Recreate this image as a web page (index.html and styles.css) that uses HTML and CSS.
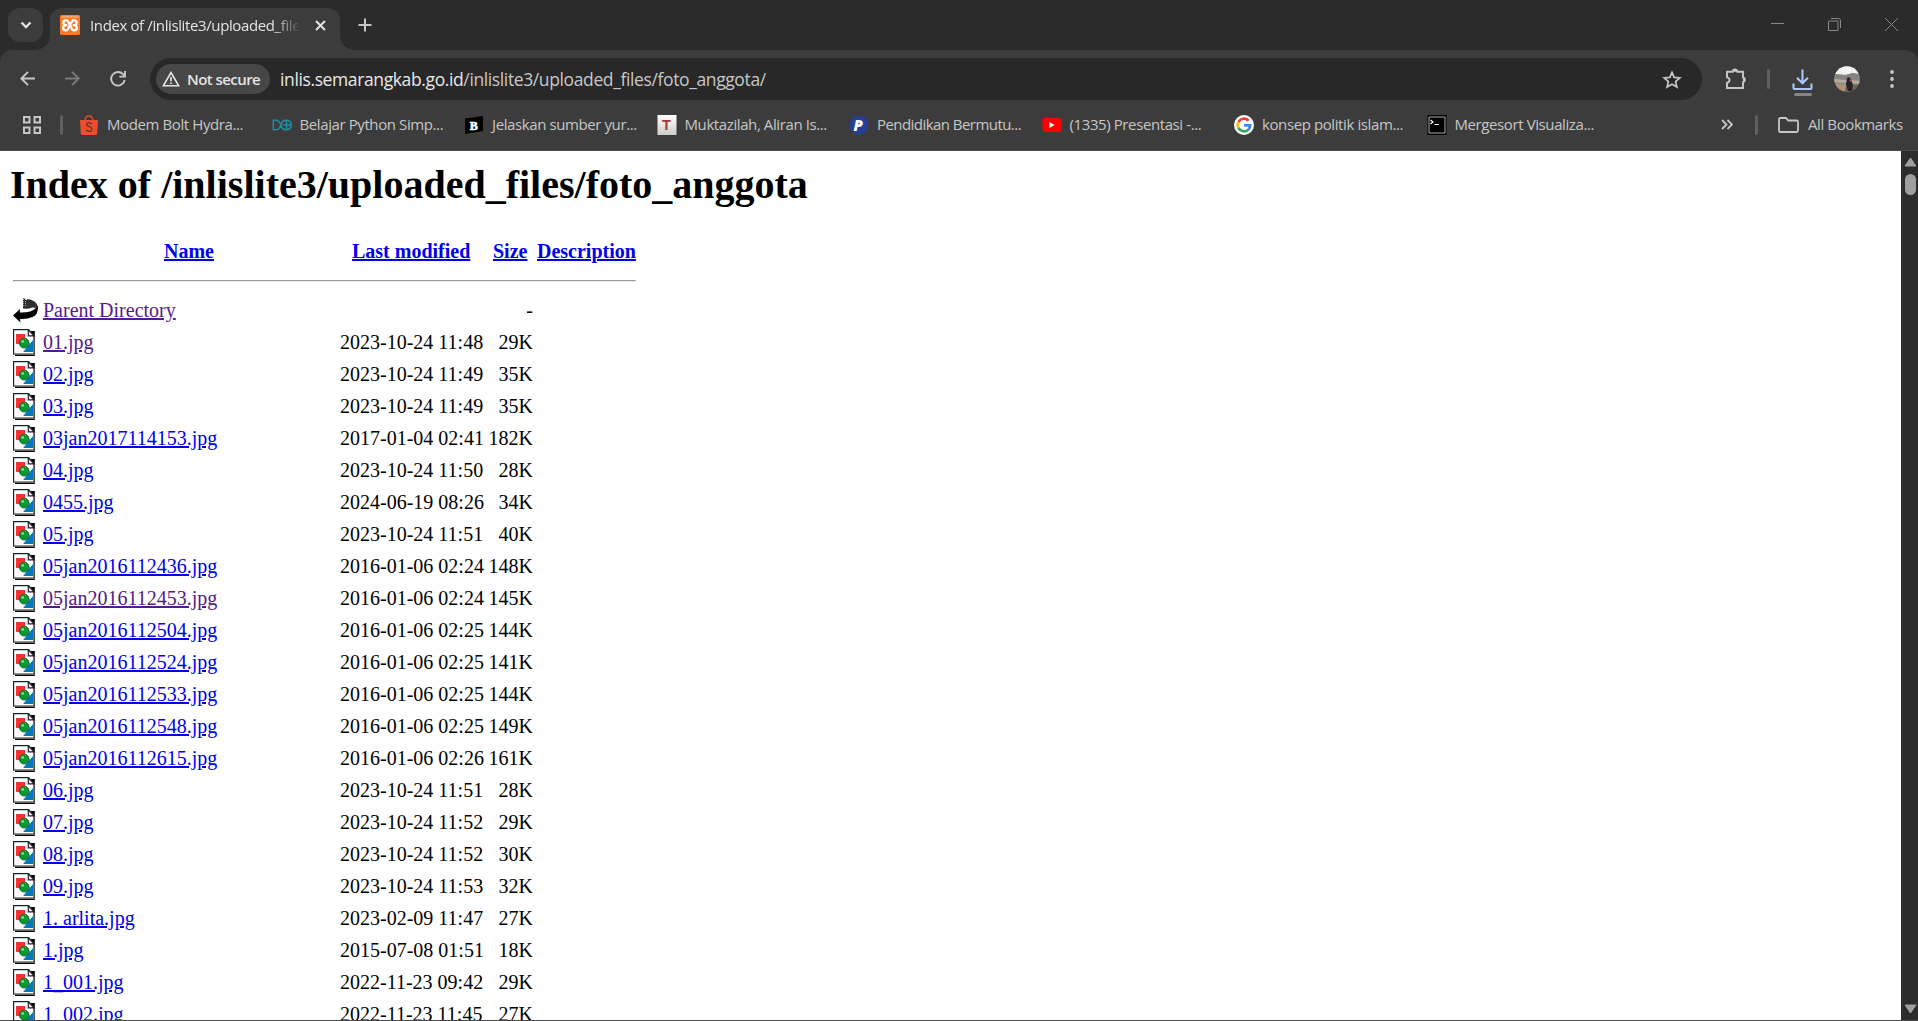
FILE: index.html
```html
<!DOCTYPE html>
<html lang="en">
<head>
<meta charset="utf-8">
<title>Index of /inlislite3/uploaded_files/foto_anggota</title>
<link rel="stylesheet" href="styles.css">
</head>
<body>
<svg class="defs" width="0" height="0">
  <symbol id="file" viewBox="0 0 23 27">
    <path d="M2 2h19.8V27H2z" fill="#000"/>
    <path d="M.6.6H15.500L21 6.500V25H.6z" fill="#fff" stroke="#222" stroke-width="1.200"/>
    <path d="M21 7v18.400H1" fill="none" stroke="#777" stroke-width="1"/>
    <path d="M3 5h9v10H3z" fill="#f93030"/>
    <path d="M20 11v12H10z" fill="#0878bd"/>
    <circle cx="11.300" cy="14.200" r="4.900" fill="#099a32" stroke="#05671f" stroke-width=".8"/>
    <circle cx="9.700" cy="12.500" r="1.300" fill="#a8e0b0"/>
    <path d="M15.300.8V6.800H21z" fill="#fff" stroke="#222" stroke-width="1.200"/>
  </symbol>
</svg>
<header class="tabstrip">
  <button class="tabsearch"><svg width="12" height="8" viewBox="0 0 12 8"><path d="M1.500 1.500 6 6l4.500-4.500" class="ln bright" stroke-width="2.300"/></svg></button>
  <div class="tab">
    <svg width="20" height="20" viewBox="0 0 20 20"><rect width="20" height="20" rx="1.500" fill="#fb7a24"/><path d="M1 .8h18v2H1z" fill="#f9a267"/><path d="M7.300 10.200H5.800a2.500 2.500 0 1 1 2.400-3.400L10 10l1.800-3.200a2.500 2.500 0 1 1 2.400 3.400h-1.500M5.800 10.200a2.600 2.600 0 1 0 2.500 3.300L10 10l1.700 3.500a2.600 2.600 0 1 0 2.500-3.300" fill="none" stroke="#fff" stroke-width="2.300"/></svg>
    <span class="tabtitle">Index of /inlislite3/uploaded_files</span>
    <svg class="tabclose" width="11" height="11" viewBox="0 0 11 11"><path d="M1 1l9 9M10 1l-9 9" class="ln bright" stroke-width="2"/></svg>
  </div>
  <svg class="newtab" width="14" height="14" viewBox="0 0 14 14"><path d="M7 .5v13M.5 7h13" class="ln" stroke-width="2"/></svg>
  <div class="winctl">
    <svg width="13" height="13" viewBox="0 0 13 13"><path d="M0 5.500h13" stroke="#8a8a8a"/></svg>
    <svg width="13" height="13" viewBox="0 0 13 13"><path d="M.5 3.500v9h9.500v-9.500H.5M3 .5h7.500q2 0 2 2v7.500" fill="none" stroke="#8a8a8a"/></svg>
    <svg width="13" height="13" viewBox="0 0 13 13"><path d="M0 0l13 13M13 0 0 13" stroke="#8a8a8a"/></svg>
  </div>
</header>
<nav class="toolbar">
  <svg class="back" width="15" height="15" viewBox="0 0 15 15"><path d="M15 7.500H1.500M8 .8 1.300 7.500 8 14.200" class="ln" stroke-width="1.900"/></svg>
  <svg class="fwd" width="15" height="15" viewBox="0 0 15 15"><path d="M0 7.500h13.500M7 .8l6.700 6.700L7 14.200" class="ln dim" stroke-width="1.900"/></svg>
  <svg class="reload" width="16" height="16" viewBox="0 0 16 16"><path d="M14.700 9A6.800 6.800 0 1 1 13 3.200l1.800 1.900M15 0v5.600H9.400" class="ln" stroke-width="1.900"/></svg>
  <div class="omnibox">
    <div class="chip">
      <svg width="18" height="16" viewBox="0 0 18 16"><path d="M9 1.500 16.700 14.800H1.300z" class="ln bright" stroke-width="1.600"/><path d="M9 6v4.300M9 11.400v1.700" class="ln bright" stroke-width="1.700"/></svg>
      <span>Not secure</span>
    </div>
    <p class="url">inlis.semarangkab.go.id<span>/inlislite3/uploaded_files/foto_anggota/</span></p>
    <svg class="star" width="20" height="19" viewBox="0 0 20 19"><path d="M10 2.300l2.200 5.100 5.600.5-4.200 3.700 1.300 5.500L10 14.200l-4.900 2.900 1.300-5.500L2.200 7.900l5.600-.5z" class="ln" stroke-width="1.700"/></svg>
  </div>
  <svg class="ext" width="22" height="22" viewBox="0 0 22 22"><path d="M2 3.800h5.600a2.400 2.400 0 0 1 4.800 0H18v5.700a2.400 2.400 0 0 1 0 4.700V20H2v-5.200c3.400-.6 3.400-4.800 0-5.400z" class="ln" stroke-width="1.900"/><path d="M7.600 3.800a2.400 2.400 0 0 1 4.800 0zM18 9.500a2.400 2.400 0 0 1 0 4.700z" fill="#c7c7c7"/></svg>
  <i class="sep"></i>
  <svg class="dl" width="21" height="28" viewBox="0 0 21 28"><path d="M10.500.5v13M5 8.800l5.500 5.500L16 8.800M1.500 14.500V19q0 1 1 1h16q1 0 1-1v-4.500" fill="none" stroke="#a8c7fa" stroke-width="2.100"/><rect x="2" y="24" width="18" height="3" rx="1.500" fill="#858585"/></svg>
  <svg class="avatar" width="26" height="26" viewBox="0 0 26 26"><clipPath id="av"><circle cx="13" cy="13" r="12.700"/></clipPath><g clip-path="url(#av)"><path d="M0 0h26v26H0z" fill="#9b8b7c"/><path d="M0 0h26v8L19 7 12 9 0 8z" fill="#f2f4f4"/><path d="M0 8l11 1 8-2 7 2v5H0z" fill="#858481"/><path d="M0 13l26 2v3L0 16z" fill="#b1aca3"/><path d="M0 20l26-2v8H0z" fill="#6e6458"/><path d="M0 18l12 1-1 6H0z" fill="#b39378"/><path d="M13 12q3-2 4 2l2 5-1 6h-4l-2-7z" fill="#222228"/><circle cx="16.500" cy="14.500" r="1" fill="#bd4e56"/></g></svg>
  <svg class="menu" width="4" height="18" viewBox="0 0 4 18"><g fill="#c7c7c7"><circle cx="2" cy="2" r="1.900"/><circle cx="2" cy="9" r="1.900"/><circle cx="2" cy="16" r="1.900"/></g></svg>
</nav>
<nav class="bookmarks">
  <svg class="apps" width="18" height="18" viewBox="0 0 18 18"><path d="M1 1h5.500v5.500H1zM11.500 1H17v5.500h-5.500zM1 11.500h5.500V17H1zM11.500 11.500H17V17h-5.500z" class="ln" stroke-width="2"/></svg>
  <i class="sep"></i>
  <ul>
    <li><svg width="20" height="20" viewBox="0 0 20 20"><path d="M6 6q0-5 4-5t4 5" fill="none" stroke="#ee4d2d" stroke-width="1.300"/><path d="M1 5h18l-.8 13.500q-.1 1.500-1.600 1.500H3.400q-1.500 0-1.600-1.500z" fill="#ee4d2d"/><path d="M12.800 8.800q-4.600-2.600-5.200.5c0 2.700 5.500 2 5.400 5q-.9 3.600-5.800.9" fill="none" stroke="#633228" stroke-width="1.400"/></svg><span>Modem Bolt Hydra...</span></li>
    <li><svg width="20" height="20" viewBox="0 0 20 20"><path d="M1.300 5.200H4q3 0 5 4.800-2 4.800-5 4.800H1.300zM8.500 10q1.800-4.800 5.500-4.800 5.200 0 5.200 4.800T14 14.800q-3.700 0-5.500-4.800M14.500 5v10M10.500 10h8" fill="none" stroke="#238da1" stroke-width="1.500"/></svg><span>Belajar Python Simp...</span></li>
    <li><svg width="20" height="20" viewBox="0 0 20 20"><path d="M1 3.500 19 1v15L1 19z" fill="#000"/><text x="5.700" y="14.500" font-family="Liberation Serif" font-weight="700" font-size="12" fill="#fff" stroke="#fff" stroke-width=".6">B</text></svg><span>Jelaskan sumber yur...</span></li>
    <li><svg width="20" height="20" viewBox="0 0 20 20"><defs><linearGradient id="tg" x2="0" y2="1"><stop stop-color="#fff"/><stop offset="1" stop-color="#ccc"/></linearGradient></defs><path d="M.5 0h19v20H.5z" fill="url(#tg)"/><text x="5" y="15" font-family="Liberation Sans" font-weight="700" font-size="14.500" fill="#a33b3b">T</text></svg><span>Muktazilah, Aliran Is...</span></li>
    <li><svg width="20" height="20" viewBox="0 0 20 20"><circle cx="10" cy="10" r="9.500" fill="#253f94"/><text x="4.600" y="15.500" font-family="Open Sans" font-style="italic" font-weight="800" font-size="15" fill="#fff">P</text></svg><span class="b5">Pendidikan Bermutu...</span></li>
    <li><svg width="20" height="20" viewBox="0 0 20 20"><rect x=".5" y="3" width="19" height="14" rx="3" fill="#f00"/><path d="M7.500 7v6l5-3z" fill="#fff"/></svg><span>(1335) Presentasi -...</span></li>
    <li><svg width="20" height="20" viewBox="0 0 20 20"><circle cx="10" cy="10" r="10" fill="#fff"/><g fill="none" stroke-width="2.700"><path d="M14.600 5.700A6.300 6.300 0 0 0 4.500 7" stroke="#ea4335"/><path d="M4.500 7a6.300 6.300 0 0 0 0 6" stroke="#fbbc05"/><path d="M4.500 13a6.300 6.300 0 0 0 9.800 1.700" stroke="#34a853"/><path d="M14.300 14.700A6 6 0 0 0 16.200 10.300H10" stroke="#4285f4"/></g></svg><span>konsep politik islam...</span></li>
    <li><svg width="20" height="20" viewBox="0 0 20 20"><path d="M.5 0h19v20H.5z" fill="#000"/><path d="M2 2h16v16H2z" fill="none" stroke="#aaa" stroke-width="1"/><path d="M3.500 5 6 7 3.500 9M7.500 9.500H12" fill="none" stroke="#fff" stroke-width="1.200"/></svg><span>Mergesort Visualiza...</span></li>
  </ul>
  <svg class="more" width="12" height="11" viewBox="0 0 12 11"><path d="M1 1l4.500 4.500L1 10M6.500 1 11 5.500 6.500 10" class="ln" stroke-width="1.800"/></svg>
  <i class="sep"></i>
  <svg class="folder" width="21" height="16" viewBox="0 0 21 16"><path d="M1 2.500Q1 1 2.500 1H8l2.200 2.500h8.300q1.500 0 1.500 1.500v8.500q0 1.500-1.500 1.500h-16Q1 15 1 13.500z" class="ln" stroke-width="1.800"/></svg>
  <span class="all">All Bookmarks</span>
</nav>
<div class="viewport">
<main>
  <h1>Index of /inlislite3/uploaded_files/foto_anggota</h1>
  <div class="listing">
    <div class="row head"><a href="#" class="c-name">Name</a><a href="#" class="c-date">Last modified</a><a href="#" class="c-size">Size</a><a href="#" class="c-desc">Description</a></div>
    <hr>
    <div class="row"><svg class="up" viewBox="0 0 25 25"><path d="M10 .5h2V2h2V1q9 1 10.700 7v3q-3-1.800-6-1.300-3 1.500-8.700.8z" fill="#303030"/><path d="M10 1.500h3m-3 2h4m-4 2h4m-4 2h4" stroke="#aaa" stroke-width=".9" stroke-dasharray="1 1"/><path d="M24.700 8q1 9-5.200 11-5.500 2.500-12.500 2l.5 3.500L0 17.500l7-6.500-.2 3.500q11.200.5 16.200-4.500z" fill="#000"/></svg><a href="#" class="seen">Parent Directory</a><span></span><b>-</b></div>
    <div class="row"><svg><use href="#file"/></svg><a href="#" class="seen">01.jpg</a><span>2023-10-24 11:48</span><b>29K</b></div>
    <div class="row"><svg><use href="#file"/></svg><a href="#">02.jpg</a><span>2023-10-24 11:49</span><b>35K</b></div>
    <div class="row"><svg><use href="#file"/></svg><a href="#">03.jpg</a><span>2023-10-24 11:49</span><b>35K</b></div>
    <div class="row"><svg><use href="#file"/></svg><a href="#">03jan2017114153.jpg</a><span>2017-01-04 02:41</span><b>182K</b></div>
    <div class="row"><svg><use href="#file"/></svg><a href="#">04.jpg</a><span>2023-10-24 11:50</span><b>28K</b></div>
    <div class="row"><svg><use href="#file"/></svg><a href="#">0455.jpg</a><span>2024-06-19 08:26</span><b>34K</b></div>
    <div class="row"><svg><use href="#file"/></svg><a href="#">05.jpg</a><span>2023-10-24 11:51</span><b>40K</b></div>
    <div class="row"><svg><use href="#file"/></svg><a href="#">05jan2016112436.jpg</a><span>2016-01-06 02:24</span><b>148K</b></div>
    <div class="row"><svg><use href="#file"/></svg><a href="#" class="seen">05jan2016112453.jpg</a><span>2016-01-06 02:24</span><b>145K</b></div>
    <div class="row"><svg><use href="#file"/></svg><a href="#">05jan2016112504.jpg</a><span>2016-01-06 02:25</span><b>144K</b></div>
    <div class="row"><svg><use href="#file"/></svg><a href="#">05jan2016112524.jpg</a><span>2016-01-06 02:25</span><b>141K</b></div>
    <div class="row"><svg><use href="#file"/></svg><a href="#">05jan2016112533.jpg</a><span>2016-01-06 02:25</span><b>144K</b></div>
    <div class="row"><svg><use href="#file"/></svg><a href="#">05jan2016112548.jpg</a><span>2016-01-06 02:25</span><b>149K</b></div>
    <div class="row"><svg><use href="#file"/></svg><a href="#">05jan2016112615.jpg</a><span>2016-01-06 02:26</span><b>161K</b></div>
    <div class="row"><svg><use href="#file"/></svg><a href="#">06.jpg</a><span>2023-10-24 11:51</span><b>28K</b></div>
    <div class="row"><svg><use href="#file"/></svg><a href="#">07.jpg</a><span>2023-10-24 11:52</span><b>29K</b></div>
    <div class="row"><svg><use href="#file"/></svg><a href="#">08.jpg</a><span>2023-10-24 11:52</span><b>30K</b></div>
    <div class="row"><svg><use href="#file"/></svg><a href="#">09.jpg</a><span>2023-10-24 11:53</span><b>32K</b></div>
    <div class="row"><svg><use href="#file"/></svg><a href="#">1. arlita.jpg</a><span>2023-02-09 11:47</span><b>27K</b></div>
    <div class="row"><svg><use href="#file"/></svg><a href="#">1.jpg</a><span>2015-07-08 01:51</span><b>18K</b></div>
    <div class="row"><svg><use href="#file"/></svg><a href="#">1_001.jpg</a><span>2022-11-23 09:42</span><b>29K</b></div>
    <div class="row"><svg><use href="#file"/></svg><a href="#">1_002.jpg</a><span>2022-11-23 11:45</span><b>27K</b></div>
  </div>
</main>
<aside class="scrollbar">
  <svg width="13" height="10" viewBox="0 0 13 10"><path d="M6.500 1 12 9H1z" fill="#9f9f9f" stroke="#9f9f9f" stroke-linejoin="round"/></svg>
  <i class="thumb"></i>
  <svg class="down" width="13" height="10" viewBox="0 0 13 10"><path d="M6.500 9 12 1H1z" fill="#9f9f9f" stroke="#9f9f9f" stroke-linejoin="round"/></svg>
</aside>
</div>
</body>
</html>
```
FILE: styles.css
```css
* { box-sizing: border-box; }
html, body { height: 100%; }
body {
  margin: 0;
  overflow: hidden;
  display: flex;
  flex-direction: column;
  background: #3c3c3c;
  font-family: "Open Sans", "Noto Sans", sans-serif;
  font-size: 15px;
  color: #c7c7c7;
}
svg { display: block; flex: none; }
.defs { position: absolute; }
.ln { fill: none; stroke: #c7c7c7; }
.bright { stroke: #e3e3e3; }
.dim { stroke: #7b7b7b; }
.sep { flex: none; width: 3px; height: 20px; border-radius: 2px; background: #5f5f5f; }

.tabstrip { flex: none; height: 50px; display: flex; background: #2b2b2b; position: relative; z-index: 1; }
.tabsearch {
  width: 35px; height: 34px; margin: 8px 0 0 8px; padding: 0;
  border: 0; border-radius: 12px; background: #3c3c3c;
  display: grid; place-items: center;
}
.tab {
  position: relative;
  width: 290px; height: 42px; margin: 8px 0 0 7px; padding: 0 0 8px 10px;
  display: flex; align-items: center;
  border-radius: 12px 12px 0 0; background: #3c3c3c; color: #e3e3e3;
}
.tab::before, .tab::after {
  content: ""; position: absolute; bottom: 0; width: 14px; height: 14px;
}
.tab::before { left: -14px; background: radial-gradient(circle at 0 0, transparent 13.5px, #3c3c3c 14px); }
.tab::after { right: -14px; background: radial-gradient(circle at 100% 0, transparent 13.5px, #3c3c3c 14px); }
.tabtitle {
  width: 209px; margin-left: 10px; overflow: hidden; white-space: nowrap;
  font-size: 15px; letter-spacing: -.38px;
  -webkit-mask-image: linear-gradient(90deg, #000 182px, transparent 211px);
  mask-image: linear-gradient(90deg, #000 182px, transparent 211px);
}
.tabclose { margin-left: 16px; }
.newtab { margin: 18px 0 0 18px; }
.winctl { margin: 18px 20px 0 auto; display: flex; gap: 44px; }

.toolbar {
  position: relative; flex: none; height: 50px;
  display: flex; align-items: flex-start;
  border-radius: 12px 12px 0 0; background: #3c3c3c;
}
.toolbar::before {
  content: ""; position: absolute; inset: 0; z-index: -1; background: #2b2b2b; height: 12px;
}
.back { margin: 21px 0 0 20px; }
.fwd { margin: 21px 0 0 30px; }
.reload { margin: 21px 0 0 30px; }
.omnibox {
  width: 1552px; height: 42px; margin: 8px 0 0 24px; padding: 0 20px 0 6px;
  display: flex; align-items: center; border-radius: 21px; background: #282828;
}
.chip {
  width: 114px; height: 30px; padding-left: 6px;
  display: flex; align-items: center; gap: 7px; border-radius: 15px;
  background: #474747; color: #e3e3e3; font-weight: 600; white-space: nowrap;
}
.chip span { letter-spacing: -.56px; margin-top: -1px; }
.url { margin: 0 0 0 10px; flex: 1; font-size: 17.500px; letter-spacing: -.38px; color: #e8e8e8; }
.url span { color: #c7c7c7; }
.ext { margin: 18px 0 0 23px; }
.toolbar .sep { margin: 19px 0 0 20px; }
.dl { margin: 19px 0 0 22px; }
.avatar { margin: 16px 0 0 21px; }
.menu { margin: 20px 0 0 30px; }

.bookmarks {
  flex: none; height: 51px; display: flex; align-items: center; padding-bottom: 1px;
  border-bottom: 1px solid #494949; letter-spacing: -.4px;
}
.apps { margin-left: 23px; }
.bookmarks .sep { margin-left: 19px; }
.bookmarks ul { flex: 1; display: flex; margin: 0 0 0 16px; padding: 0; list-style: none; }
.bookmarks li { width: 192.500px; display: flex; align-items: center; gap: 8px; white-space: nowrap; }
.bookmarks li span { margin-top: -1px; }
.b5 { letter-spacing: -.55px; }
.more + .sep { margin-left: 22px; }
.folder { margin: 0 9px 0 20px; }
.all { width: 110px; margin-top: -1px; white-space: nowrap; }

.viewport {
  flex: 1; min-height: 0; display: flex; background: #fff; color: #000;
  border-bottom: 1px solid #494949;
  font-family: "Liberation Serif", serif; font-size: 20px;
}
main { flex: 1; padding: 9px 10px 0; overflow: hidden; }
h1 { margin: 0 0 25px; font-size: 40px; line-height: 50px; white-space: nowrap; }
.listing { width: 626px; padding-left: 3px; }
.row {
  height: 32px; line-height: 32px;
  display: grid; grid-template-columns: 30px 297px 147px 50px 98px;
  white-space: nowrap;
}
.row svg { width: 23px; height: 27px; margin-top: 3px; }
.row .up { width: 25px; height: 25px; margin-top: 4px; }
.row a { color: #0000ee; justify-self: start; text-decoration: underline; }
.row .seen { color: #551a8b; }
.row b { font-weight: 400; justify-self: end; margin-right: 4px; }
.head { font-weight: 700; }
.head .c-name { grid-column: 2; margin-left: 121px; }
.head .c-date { margin-left: 12px; }
.head .c-size { margin-left: 6px; }
hr { margin: 13px 0 12px; }

.scrollbar {
  width: 17px; padding: 6px 2px 6px 3px; background: #2c2c2c;
  display: flex; flex-direction: column; align-items: center;
}
.thumb { width: 11px; height: 21px; margin-top: 7px; border-radius: 6px; background: #9f9f9f; }
.down { margin-top: auto; }
```
